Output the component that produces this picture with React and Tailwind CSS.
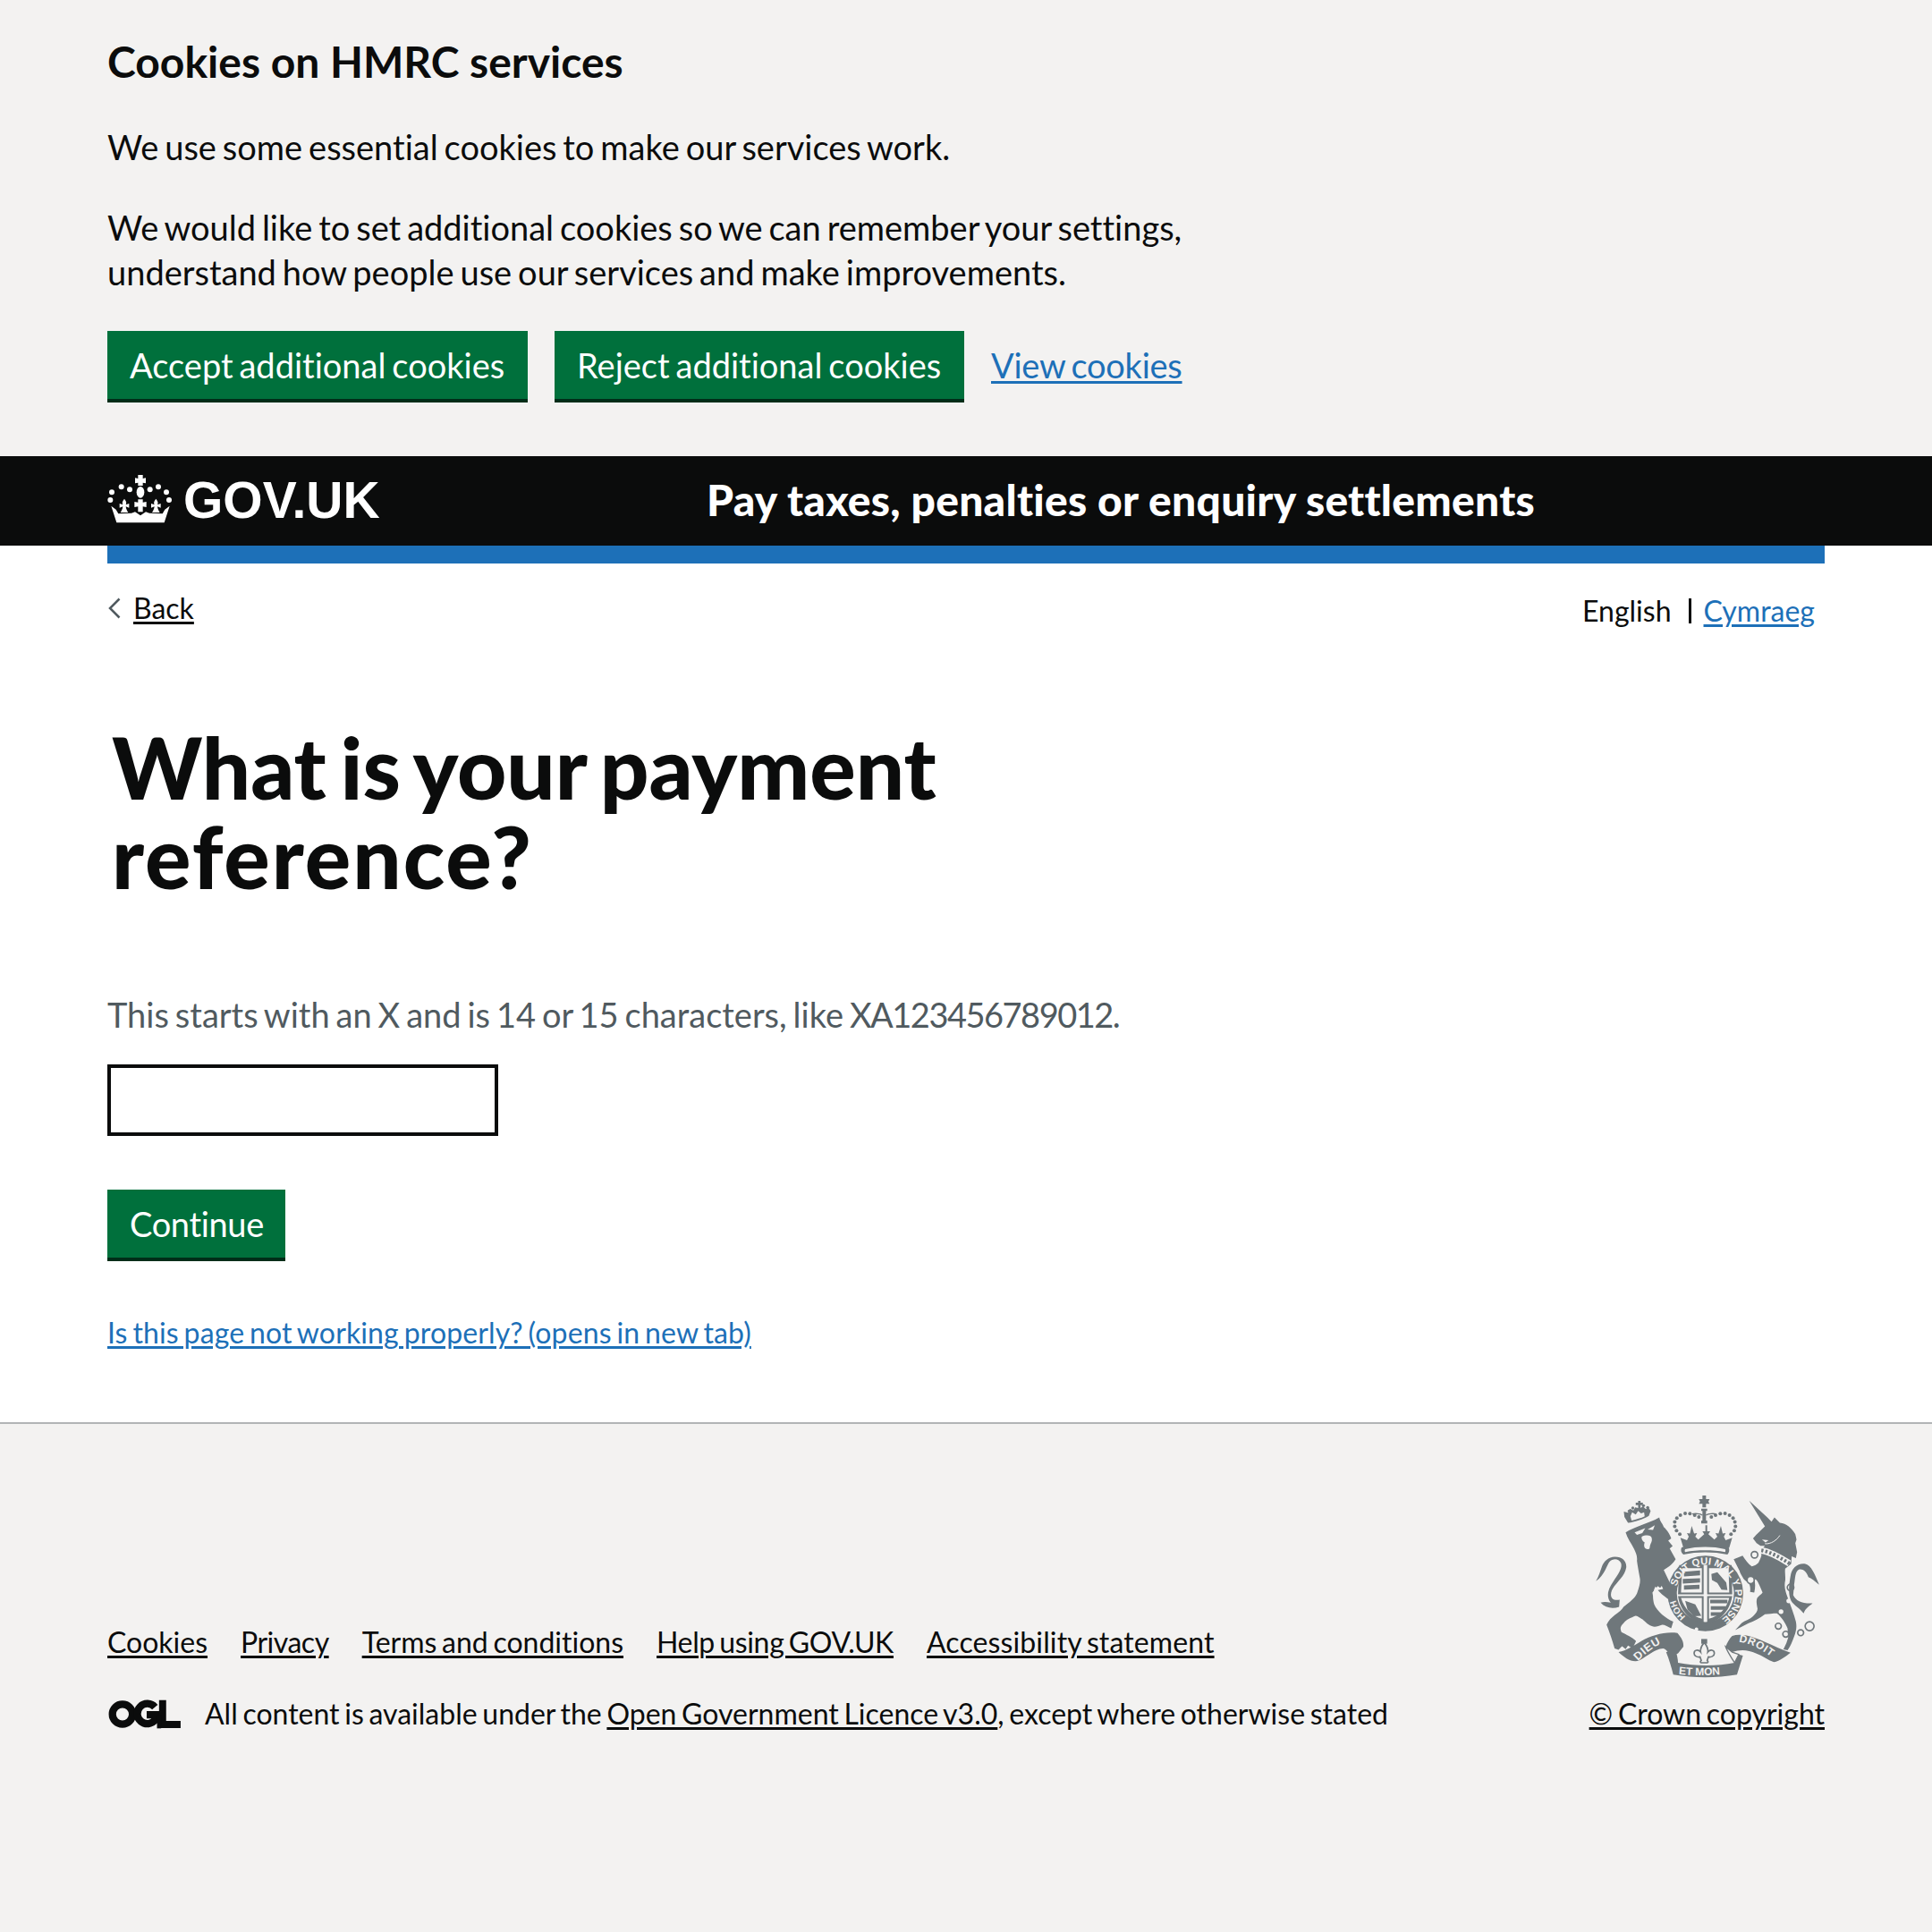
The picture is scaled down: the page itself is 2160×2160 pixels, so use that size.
import React from 'react';

const BODY = 'text-[38px] leading-[50px] [word-spacing:-2.8px]';
const SMALL = 'text-[32px] leading-[40px] [word-spacing:-2.5px]';
const UNDERLINE = 'underline decoration-[3px] underline-offset-[3px]';

const GreenButton = ({ width, children }) => (
  <button className={`${width} ${BODY} h-[80px] border-b-4 border-[#002d18] bg-[#00703c] px-[25px] text-left whitespace-nowrap text-white`}>
    {children}
  </button>
);

const CrownLogo = () => (
  <svg viewBox="0 0 255 195" className="mb-[6px] -ml-[5px] h-[65px] w-[85px] shrink-0" fill="#ffffff">
    <path d="M118 18h16v12l10-2v18l-10-2v10h-16v-10l-10 2V28l10 2z" />
    <ellipse cx="126" cy="76" rx="13" ry="19" />
    <circle cx="30" cy="76" r="9" />
    <circle cx="62" cy="58" r="9" />
    <circle cx="90" cy="67" r="9" />
    <circle cx="158" cy="67" r="9" />
    <circle cx="186" cy="58" r="9" />
    <circle cx="213" cy="76" r="9" />
    <circle cx="25" cy="102" r="9" />
    <circle cx="222" cy="102" r="9" />
    <path d="M72 98c7 8 8 14 5 20l11-4v14l-11-4c1 8 4 14 8 20H59c4-6 7-12 8-20l-11 4v-14l11 4c-3-6-2-12 5-20z" />
    <path d="M178 98c7 8 8 14 5 20l11-4v14l-11-4c1 8 4 14 8 20h-26c4-6 7-12 8-20l-11 4v-14l11 4c-3-6-2-12 5-20z" />
    <path d="M118 100h16v10l12-2v18l-12-2v18h-16v-18l-12 2v-18l12 2z" />
    <path d="M28 122l16 12 8 14 44-2 12-4 18 12 18-12 12 4 44 2 8-14 16-12-18 56H46z" />
  </svg>
);

const OglLogo = () => (
  <svg viewBox="0 0 245 100" className="h-[33px] w-[83px] shrink-0" fill="none" stroke="#0b0c0c" strokeWidth="25">
    <circle cx="48" cy="50" r="34" />
    <path d="M158 26a34 34 0 1 0 2 42V52h-30" />
    <path d="M184 2v83h61" strokeWidth="24" />
    <path d="M172 52v46" strokeWidth="14" />
  </svg>
);

// coat of arms, drawn in the coordinates of a 900 x 900 crop of the footer
const Crest = () => (
  <svg viewBox="60 60 780 622" className="h-[207px] w-[260px]" fill="#6f777b">
    {/* lion */}
    <path d="M172 190C200 172 250 160 285 140C288 155 296 160 300 172C312 182 322 200 325 210L315 218L330 236L320 244L340 280C332 292 326 298 318 304L300 316C316 350 334 384 345 426L332 426L300 402L272 372C262 392 262 410 268 432C278 456 306 478 332 490L325 512C312 506 304 500 295 500C282 504 272 510 260 505C244 500 236 486 225 480C216 474 212 470 205 470C190 476 172 484 165 495C155 505 152 512 158 525C174 534 192 540 207 555L195 580L180 570L172 582L160 572L148 584L135 580C128 554 118 526 108 500C114 486 125 476 135 468C150 456 160 450 165 440C186 424 204 410 210 395C218 372 222 356 220 345C216 320 212 302 210 285C212 270 206 258 200 245C190 225 178 210 172 190Z" />
    <path d="M202 190l36-14-10 16-18 6zM226 204c14-6 32-6 34 6 2 10-4 16-6 24-2 10 0 12-8 12-12 0-14-12-10-22-8-4-12-14-10-20zM246 180l24-14-6 16z" fill="#f3f2f1" />
    <path d="M262 392l18-22 8 6 8-10 14 20 18 12 10 24-8 4-26-2-22-16-18-4z" fill="#f3f2f1" />
    <path d="M288 316l36 76 20 34-16-2-34-26-14-14 18-4-10-22z" />
    {/* lion crown */}
    <path d="M180 158c22-4 50-12 70-24l6-16-8-14-8 8-10-10-8 6v-10h8v-8h-8V84h-8v6h-8v8h8v10l-10-2-6 10-12-6-6 14-14-4 2 18z" />
    <path d="M192 150c16-4 32-8 44-14l-2-14-10 4-10-8-8 12-12-8-6 14z" fill="#f3f2f1" />
    <circle cx="174" cy="130" r="5" /><circle cx="184" cy="118" r="5" /><circle cx="196" cy="108" r="5" /><circle cx="232" cy="100" r="5" /><circle cx="246" cy="106" r="5" />
    {/* lion tail */}
    <path d="M150 440C128 448 104 444 88 426C100 422 110 424 122 426C100 396 122 368 136 346C150 326 162 306 156 292C148 276 128 278 118 288C108 300 104 330 72 354C82 338 86 322 92 306C98 288 114 272 136 272C162 272 176 288 174 308C170 336 144 354 128 380C116 402 124 422 152 416Z" />

    {/* unicorn */}
    <path d="M587 83L648 140L662 154L672 140L690 158C712 160 730 176 742 196L746 214L742 226L748 256L744 276L730 270L728 296L708 312C706 328 710 340 708 352C704 372 708 386 716 408C728 440 738 466 744 490C748 510 744 524 738 540C732 556 726 572 716 586L702 583L712 562L718 544L716 512C708 494 696 474 680 462C666 462 652 464 640 465C622 478 602 490 585 495L540 518L562 494C574 486 590 482 600 472C610 462 616 454 615 445C612 430 610 420 614 410C620 402 628 398 632 392C626 378 620 362 612 350L604 346C608 360 608 376 604 392L590 390C592 376 590 368 585 360C574 352 568 348 565 340C560 332 556 326 555 320L535 280L565 268C574 282 584 296 596 304C606 302 612 298 618 292C622 284 626 276 628 268L628 248L640 235L625 235L612 226L600 210C614 194 628 182 640 170Z" />
    <path d="M628 250C660 256 694 276 722 294" stroke="#f3f2f1" strokeWidth="22" fill="none" />
    <path d="M628 250C660 256 694 276 722 294" stroke="#6f777b" strokeWidth="12" strokeDasharray="7 7" fill="none" />
    <path d="M630 214l22 2-10 8z" fill="#f3f2f1" />
    <path d="M640 228c20 2 40-12 50-28" stroke="#f3f2f1" strokeWidth="3" fill="none" />
    <circle cx="605" cy="265" r="11" stroke="#6f777b" strokeWidth="5" fill="#f3f2f1" />
    <circle cx="592" cy="350" r="12" stroke="#6f777b" strokeWidth="5" fill="#f3f2f1" />
    <circle cx="726" cy="375" r="11" stroke="#6f777b" strokeWidth="5" fill="#f3f2f1" />
    <circle cx="720" cy="420" r="8" fill="#f3f2f1" />
    <circle cx="694" cy="456" r="8" fill="#f3f2f1" />
    <circle cx="685" cy="505" r="10" stroke="#6f777b" strokeWidth="5" fill="none" />
    <circle cx="710" cy="532" r="10" stroke="#6f777b" strokeWidth="5" fill="none" />
    <circle cx="760" cy="527" r="10" stroke="#6f777b" strokeWidth="5" fill="none" />
    <circle cx="790" cy="505" r="15" stroke="#6f777b" strokeWidth="5" fill="none" />
    {/* unicorn tail */}
    <path d="M735 400C744 420 766 430 800 428C786 440 776 444 770 462C756 444 738 436 728 420C716 396 722 360 726 336C730 310 750 292 776 296C796 302 808 330 822 366C806 352 796 344 786 340C780 322 768 312 756 314C740 320 742 344 738 366Z" />

    {/* shield and garter */}
    <circle cx="440" cy="395" r="127" />
    <circle cx="440" cy="395" r="96" fill="#f3f2f1" />
    <path d="M352 300h82v98h-86zM446 300h82l2 98h-84zM348 404h86v92c-40-6-78-38-86-92zM446 404h84c-8 54-46 86-84 92z" />
    <path d="M362 310h66v82h-70zM452 310h66l2 82h-68zM358 410h70v70c-32-8-60-34-70-70zM452 410h68c-8 36-36 62-68 70z" fill="#f3f2f1" />
    <path d="M368 322l54-4v16l-54 4zM364 346l58-2v14l-58 4zM368 368l52-2v14l-52 2zM456 416h58v12h-58zM458 438h50v12h-50zM458 458h36v12h-36zM460 330l20-6 30 34 4 26-20-2-14-22-18-10zM372 420l34 12 20 38-24 2-22-22z" />
    <path id="garter-path" d="M343 372A100 100 0 1 1 478 490" fill="none" />
    <text fontFamily="'Liberation Sans', sans-serif" fontWeight="700" fontSize="34" fill="#f3f2f1">
      <textPath href="#garter-path">SOIT QUI MAL Y PENSE</textPath>
    </text>
    <path id="garter-hon" d="M374 473A102 102 0 0 1 340 377" fill="none" />
    <text fontFamily="'Liberation Sans', sans-serif" fontWeight="700" fontSize="30" fill="#f3f2f1">
      <textPath href="#garter-hon">HOH</textPath>
    </text>
    <circle cx="410" cy="515" r="6" fill="#f3f2f1" />
    <circle cx="447" cy="528" r="6" fill="#f3f2f1" />

    {/* royal crown */}
    <path d="M430 66h12v12h12l-4 8 4 8-12 0v12h-12v-12h-12l4-8-4-8h12z" />
    <path d="M426 110h20v8h-4v32h4v10h-20v-10h4v-32h-4z" />
    <path d="M430 132c-8-6-26-6-34-4M442 132c8-6 26-6 34-4" stroke="#6f777b" strokeWidth="4" fill="none" />
    <g>
      <circle cx="354" cy="196" r="6" /><circle cx="343" cy="184" r="6" /><circle cx="337" cy="170" r="6" /><circle cx="337" cy="155" r="6" /><circle cx="344" cy="142" r="6" /><circle cx="356" cy="132" r="6" />
      <circle cx="372" cy="126" r="6" /><circle cx="388" cy="127" r="6" /><circle cx="404" cy="132" r="6" /><circle cx="418" cy="138" r="6" />
      <circle cx="526" cy="196" r="6" /><circle cx="537" cy="184" r="6" /><circle cx="541" cy="170" r="6" /><circle cx="539" cy="155" r="6" /><circle cx="533" cy="142" r="6" /><circle cx="521" cy="132" r="6" />
      <circle cx="506" cy="126" r="6" /><circle cx="490" cy="127" r="6" /><circle cx="474" cy="132" r="6" /><circle cx="460" cy="138" r="6" />
    </g>
    <path d="M356 208l22 8 6-12-6-12 10 2 6-26 8 26 10-2-6 12 10 10 20-18-6-10 10 0v-20l6 0v20l10 0-6 10 20 18 10-10-6-12 10 2 8-26 6 26 10-2-6 12 6 12 22-8-10 34H366z" />
    <path d="M360 240c50-14 110-14 158 0c4 8 2 18-4 24c-48-10-102-10-148 0c-8-6-10-16-6-24z" />
    <path d="M372 246c40-10 94-10 134 0c2 4 2 6 0 10c-40-8-94-8-134 0c-2-4-2-6 0-10z" fill="#f3f2f1" />

    {/* motto ribbons */}
    <path d="M148 592C176 586 196 572 226 554C260 536 304 522 346 528C360 544 368 558 366 574L348 596L322 608C316 596 312 584 298 580C268 582 246 606 218 620C196 630 168 612 148 592Z" />
    <path d="M308 592L340 586C344 600 348 616 348 628C408 640 480 640 538 628L552 600L566 604L546 668C476 680 402 680 332 668C326 644 318 616 308 592Z" />
    <path d="M530 538C560 528 600 540 640 558C668 570 696 584 726 594C710 606 690 622 670 626C650 618 632 604 610 596C584 584 556 582 530 592C516 586 508 582 508 574C514 560 520 548 530 538Z" />
    <path d="M508 574C514 592 526 608 538 628L552 600L530 592Z" fill="#f3f2f1" stroke="#6f777b" strokeWidth="4" />
    <path id="ribbon-left" d="M214 622C238 596 276 566 318 552" fill="none" />
    <path id="ribbon-mid" d="M350 666C410 672 470 672 526 662" fill="none" />
    <path id="ribbon-right" d="M552 558C596 562 638 590 674 618" fill="none" />
    <text fontFamily="'Liberation Sans', sans-serif" fontWeight="700" fontSize="38" fill="#f3f2f1" letterSpacing="2">
      <textPath href="#ribbon-left">DIEU</textPath>
    </text>
    <text fontFamily="'Liberation Sans', sans-serif" fontWeight="700" fontSize="36" fill="#f3f2f1">
      <textPath href="#ribbon-mid">ET MON</textPath>
    </text>
    <text fontFamily="'Liberation Sans', sans-serif" fontWeight="700" fontSize="36" fill="#f3f2f1" letterSpacing="2">
      <textPath href="#ribbon-right">DROIT</textPath>
    </text>
    {/* fleur de lis */}
    <path d="M426 548h20v16h-20z" />
    <path d="M436 560c-10 12-14 20-12 32-8-10-22-8-22 4 0 10 12 14 20 12l4 12c-4 4-4 6 0 8h20c4-2 4-4 0-8l4-12c8 2 20-2 20-12 0-12-14-14-22-4 2-12-2-20-12-32z" fill="#f3f2f1" stroke="#6f777b" strokeWidth="5" />
  </svg>
);

export default function App() {
  return (
    <div className="flex min-h-screen flex-col bg-white font-[Lato] text-[#0b0c0c] [font-variant-ligatures:none]">
      {/* Cookie banner */}
      <section className="bg-[#f3f2f1] px-[120px] pt-[39px] pb-[60px]">
        <h2 className="text-[48px] leading-[60px] font-bold">Cookies on HMRC services</h2>
        <div className={`mt-[40px] w-[1280px] ${BODY}`}>
          <p>We use some essential cookies to make our services work.</p>
          <p className="mt-[40px]">
            We would like to set additional cookies so we can remember your settings,
            <br />
            understand how people use our services and make improvements.
          </p>
        </div>
        <div className="mt-[41px] flex items-center gap-[30px]">
          <GreenButton width="w-[470px]">Accept additional cookies</GreenButton>
          <GreenButton width="w-[458px]">Reject additional cookies</GreenButton>
          <a className={`${BODY} ${UNDERLINE} mb-[4px] tracking-[-0.25px] text-[#1d70b8]`}>View cookies</a>
        </div>
      </section>

      {/* GOV.UK header */}
      <header className="flex h-[100px] items-center bg-[#0b0c0c] px-[120px] text-white">
        <CrownLogo />
        <span className="ml-[5px] w-[585px] font-['Liberation_Sans'] text-[57px] font-bold">GOV.UK</span>
        <span className="-mt-[2px] text-[48px] leading-[60px] font-black tracking-[0.25px]">Pay taxes, penalties or enquiry settlements</span>
      </header>

      <main className="mx-[120px] border-t-[20px] border-[#1d70b8] pt-[30px] pb-[80px]">
        <div className="flex h-[44px] items-start justify-between">
          <a className={`flex items-center ${SMALL}`}>
            <svg viewBox="0 0 14 24" className="mr-[14px] ml-[1px] h-[24px] w-[14px]" fill="none" stroke="#505a5f" strokeWidth="2.5">
              <path d="M12.5 1.5L2 12l10.5 10.5" />
            </svg>
            <span className={UNDERLINE}>Back</span>
          </a>
          <div className={`mt-[3px] mr-[11px] flex items-center ${SMALL}`}>
            <span>English</span>
            <span className="mr-[14px] ml-[19px] h-[28px] w-[3px] bg-[#0b0c0c]" />
            <a className={`${UNDERLINE} text-[#1d70b8]`}>Cymraeg</a>
          </div>
        </div>

        <h1 className="mt-[103px] ml-[5px] w-[1200px] text-[96px] leading-[100px] font-black [word-spacing:-7px]">
          What is your payment
          <br />
          <span className="tracking-[2px]">reference?</span>
        </h1>

        <p className={`mt-[102px] text-[#505a5f] ${BODY}`}>
          This starts with an X and is 14 or 15 characters, like <span className="tracking-[-1.5px]">XA123456789012.</span>
        </p>
        <input type="text" className="mt-[31px] block h-[80px] w-[437px] border-4 border-[#0b0c0c] bg-white" />
        <div className="mt-[60px] tracking-[-0.35px]">
          <GreenButton width="w-[199px]">Continue</GreenButton>
        </div>
        <a className={`mt-[60px] block tracking-[0.13px] ${SMALL} ${UNDERLINE} text-[#1d70b8]`}>Is this page not working properly? (opens in new tab)</a>
      </main>

      {/* Footer */}
      <footer className="flex flex-1 items-start justify-between border-t-2 border-[#b1b4b6] bg-[#f3f2f1] px-[120px] pt-[78px]">
        <div className={`mt-[146px] ${SMALL}`}>
          <ul className="flex gap-[37px]">
            <li className={UNDERLINE}>Cookies</li>
            <li className={`${UNDERLINE} tracking-[-0.5px]`}>Privacy</li>
            <li className={UNDERLINE}>Terms and conditions</li>
            <li className={`${UNDERLINE} tracking-[-0.35px]`}>Help using GOV.UK</li>
            <li className={`${UNDERLINE} tracking-[0.12px]`}>Accessibility statement</li>
          </ul>
          <div className="mt-[40px] flex items-center">
            <OglLogo />
            <p className="ml-[26px]">
              All content is available under the <a className={UNDERLINE}>Open Government Licence v3.0</a>, except where otherwise stated
            </p>
          </div>
        </div>
        <div className="flex flex-col items-end">
          <Crest />
          <a className={`mt-[19px] ${SMALL} ${UNDERLINE}`}>© Crown copyright</a>
        </div>
      </footer>
    </div>
  );
}
